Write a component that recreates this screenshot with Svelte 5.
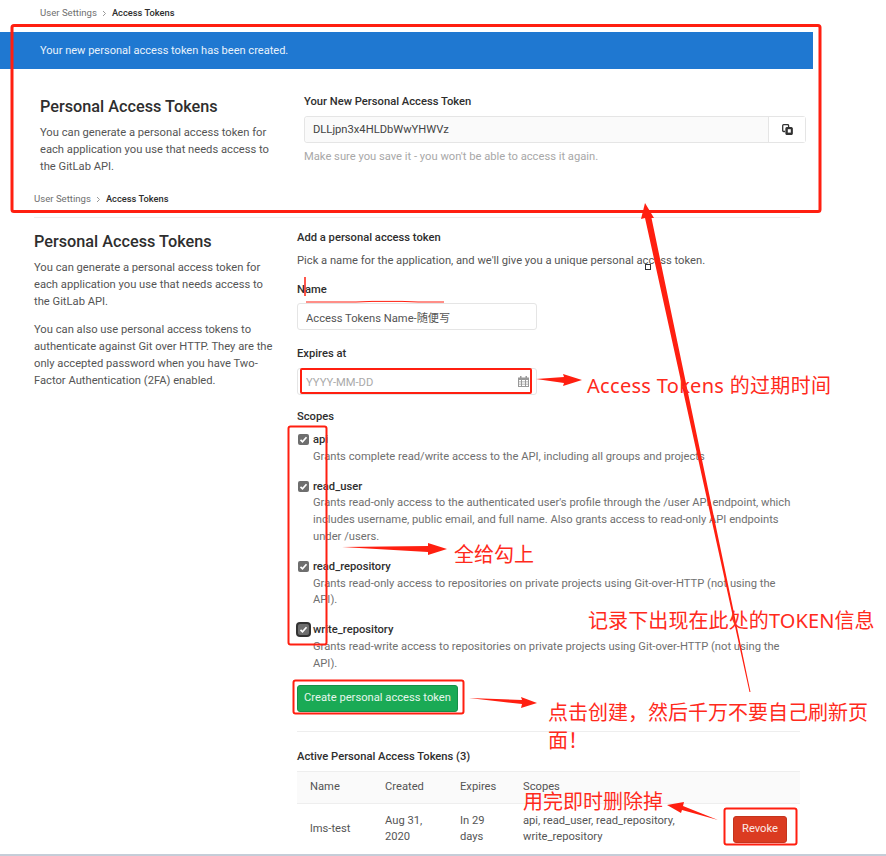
<script>
  const scopes = [
    { name: "api", lines: "Grants complete read/write access to the API, including all groups and projects" },
    { name: "read_user", lines: "Grants read-only access to the authenticated user's profile through the /user API endpoint, which includes username, public email, and full name. Also grants access to read-only API endpoints under /users." },
    { name: "read_repository", lines: "Grants read-only access to repositories on private projects using Git-over-HTTP (not using the API)." },
    { name: "write_repository", lines: "Grants read-write access to repositories on private projects using Git-over-HTTP (not using the API).", focus: true }
  ];
</script>

<style>
  :global(body) {
    font-family: Roboto, "Noto Sans CJK SC", sans-serif;
    background: #fff;
    color: #2e2e2e;
  }

  .page {
    position: relative;
    width: 886px;
    height: 856px;
    overflow: hidden;
    font-size: 11.2px;
    line-height: 16.8px;
  }

  .crumbs {
    display: flex;
    align-items: center;
    gap: 5px;
    height: 26px;
    padding-left: 40px;
    font-size: 9.6px;
    color: #707070;
  }

  .crumbs b {
    font-size: 9.3px;
    font-weight: 500;
    color: #2e2e2e;
  }

  .crumbs svg {
    width: 5px;
    height: 7px;
  }

  .crumbs.second {
    margin: 19px 0 0 34px;
    padding-left: 0;
    height: 24px;
    width: 766px;
    padding-bottom: 6px;
    border-bottom: 1px solid #eee;
  }

  .banner {
    margin-top: 6px;
    width: 773px;
    height: 35px;
    padding: 2px 0 0 40px;
    display: flex;
    align-items: center;
    background: #1f78d1;
    color: #e8f2fb;
    font-size: 11.05px;
  }

  .created {
    display: flex;
    padding: 25px 80px 0 40px;
    height: 74px;
  }

  .created .intro {
    width: 264px;
    flex: none;
  }

  .created .intro p {
    width: 236px;
  }

  .created .result {
    flex: 1;
  }

  h2 {
    margin: 0 0 5px;
    font-size: 16.25px;
    line-height: 26px;
    font-weight: 500;
  }

  p {
    margin: 0;
    color: #555;
  }

  label,
  h3,
  h4 {
    display: block;
    margin: 0;
    font-size: 11.2px;
    font-weight: 500;
    color: #2e2e2e;
  }

  .tokenrow {
    display: flex;
    margin-top: 5px;
    height: 27px;
    border: 1px solid #e5e5e5;
    border-radius: 3px;
    box-sizing: border-box;
  }

  .tokenrow input {
    flex: 1;
    min-width: 0;
    border: 0;
    border-right: 1px solid #e5e5e5;
    background: #fafafa;
    padding: 2px 8px 0;
    font: inherit;
    color: #444;
    border-radius: 3px 0 0 3px;
  }

  .tokenrow button {
    width: 36px;
    border: 0;
    background: #fff;
    padding: 0;
    display: flex;
    align-items: center;
    justify-content: center;
  }

  .hint {
    margin-top: 6px;
    color: #a8a8a8;
  }

  .main {
    display: flex;
    padding: 12px 86px 0 34px;
  }

  .main .intro {
    width: 263px;
    flex: none;
    margin-top: -1px;
  }

  .main .intro p {
    width: 240px;
    margin-bottom: 12px;
  }

  .form {
    flex: 1;
    min-width: 0;
  }

  .form > p {
    margin-top: 6px;
  }

  .field {
    margin-top: 12px;
  }

  .field.expires {
    margin-top: 16px;
  }

  .field.scopes {
    margin-top: 14px;
  }

  .field input {
    display: block;
    width: 240px;
    height: 27px;
    margin-top: 5px;
    box-sizing: border-box;
    border: 1px solid #e5e5e5;
    border-radius: 3px;
    padding: 1px 8px 0;
    font: inherit;
    color: #555;
    background: #fff;
  }

  .field input::placeholder {
    color: #aaa;
  }

  .dateinput {
    position: relative;
    width: 240px;
  }

  .dateinput svg {
    position: absolute;
    right: 8px;
    top: 8px;
    width: 11px;
    height: 11px;
  }

  .scope {
    display: flex;
    gap: 4px;
    margin-top: 6px;
    margin-bottom: 13px;
  }

  .scope + .scope {
    margin-top: 0;
  }

  .check {
    flex: none;
    width: 11px;
    height: 11px;
    margin-top: 2px;
    margin-left: 1px;
    border-radius: 2px;
    background: #6e6e6e;
    display: flex;
    align-items: center;
    justify-content: center;
  }

  .check.focus {
    box-shadow: 0 0 0 2px #333;
  }

  .check svg {
    width: 9px;
    height: 9px;
  }

  .scope strong {
    display: block;
    font-weight: 500;
    color: #2e2e2e;
  }

  .scope span.text {
    display: block;
    color: #707070;
  }

  .create {
    display: block;
    margin-top: -1px;
    width: 161px;
    height: 27px;
    padding: 0;
    border: 1px solid #168f48;
    border-radius: 3px;
    background: #1aaa55;
    color: #e6f6ec;
    font: inherit;
  }

  .divider {
    height: 1px;
    background: #eee;
    margin-top: 19px;
  }

  h4 {
    margin-top: 17px;
  }

  table {
    width: 100%;
    margin-top: 6px;
    border-collapse: collapse;
    table-layout: fixed;
    color: #555;
  }

  th {
    height: 31px;
    background: #fafafa;
    border-top: 1px solid #eee;
    border-bottom: 1px solid #eee;
    text-align: left;
    font-weight: 400;
    padding: 0 0 0 13px;
  }

  td {
    height: 50px;
    padding: 0 0 0 13px;
  }

  .col1 {
    width: 62px;
  }

  .col2 {
    width: 50px;
  }

  .col4 {
    width: 165px;
  }

  .revoke {
    width: 54px;
    height: 27px;
    padding: 0;
    border: 1px solid #c4341d;
    border-radius: 3px;
    background: #db3b21;
    color: #fbe9e5;
    font: inherit;
    margin-left: 32px;
  }

  .statusbar {
    position: absolute;
    left: 0;
    right: 0;
    bottom: 0;
    height: 2px;
    background: #c5cdd8;
  }

  .marks {
    position: absolute;
    inset: 0;
    width: 886px;
    height: 856px;
  }

  .note {
    position: absolute;
    font-family: "Noto Sans", "Noto Sans CJK SC", sans-serif;
    font-size: 20px;
    line-height: 28px;
    color: #ff2a1c;
    white-space: nowrap;
  }

  .n1 { left: 587px; top: 372px; letter-spacing: 0.3px; }
  .n2 { left: 454px; top: 541px; }
  .n3 { left: 588px; top: 607px; letter-spacing: 0.1px; }
  .n4 { left: 548px; top: 699px; width: 322px; white-space: normal; }
  .n5 { left: 523px; top: 788px; }
</style>

<div class="page">
  <div class="crumbs">
    <span>User Settings</span>
    <svg viewBox="0 0 5 7"><path d="M1 1l2.5 2.5L1 6" fill="none" stroke="#999" /></svg>
    <b>Access Tokens</b>
  </div>

  <div class="banner">Your new personal access token has been created.</div>

  <section class="created">
    <div class="intro">
      <h2>Personal Access Tokens</h2>
      <p>You can generate a personal access token for each application you use that needs access to the GitLab API.</p>
    </div>
    <div class="result">
      <label for="newtoken">Your New Personal Access Token</label>
      <div class="tokenrow">
        <input id="newtoken" readonly value="DLLjpn3x4HLDbWwYHWVz" />
        <button aria-label="Copy">
          <svg width="11" height="11" viewBox="0 0 11 11" fill="none" stroke="#333" stroke-width="1.3">
            <path d="M3 7.5H1.6a1 1 0 0 1-.9-.9V1.6a1 1 0 0 1 .9-.9h4a1 1 0 0 1 1 .9V3" />
            <rect x="4" y="3.6" width="6.2" height="6.8" rx="1" fill="#333" />
            <rect x="5.8" y="5.2" width="3" height="3.4" fill="#fff" stroke="none" />
          </svg>
        </button>
      </div>
      <p class="hint">Make sure you save it - you won't be able to access it again.</p>
    </div>
  </section>

  <div class="crumbs second">
    <span>User Settings</span>
    <svg viewBox="0 0 5 7"><path d="M1 1l2.5 2.5L1 6" fill="none" stroke="#999" /></svg>
    <b>Access Tokens</b>
  </div>

  <section class="main">
    <div class="intro">
      <h2>Personal Access Tokens</h2>
      <p>You can generate a personal access token for each application you use that needs access to the GitLab API.</p>
      <p>You can also use personal access tokens to authenticate against Git over HTTP. They are the only accepted password when you have Two-Factor Authentication (2FA) enabled.</p>
    </div>

    <div class="form">
      <h3>Add a personal access token</h3>
      <p>Pick a name for the application, and we'll give you a unique personal access token.</p>

      <div class="field">
        <label for="name">Name</label>
        <input id="name" value="Access Tokens Name-随便写" />
      </div>

      <div class="field expires">
        <label for="expires">Expires at</label>
        <div class="dateinput">
          <input id="expires" placeholder="YYYY-MM-DD" />
          <svg viewBox="0 0 11 11" fill="#999">
            <path d="M2 0h1.5v1.5h4V0H9v1.5h2V11H0V1.5h2zM1 4v1.5h2V4zm3 0v1.5h3V4zm4 0v1.5h2V4zM1 6.2v1.5h2V6.2zm3 0v1.5h3V6.2zm4 0v1.5h2V6.2zM1 8.4V10h2V8.4zm3 0V10h3V8.4zm4 0V10h2V8.4z" fill-rule="evenodd" />
          </svg>
        </div>
      </div>

      <div class="field scopes">
        <h3>Scopes</h3>
        {#each scopes as s}
          <div class="scope">
            <span class="check" class:focus={s.focus}>
              <svg viewBox="0 0 9 9"><path d="M1.5 4.8l2 2 4-4.6" fill="none" stroke="#fff" stroke-width="1.7" /></svg>
            </span>
            <div>
              <strong>{s.name}</strong>
              <span class="text">{s.lines}</span>
            </div>
          </div>
        {/each}
      </div>

      <button class="create">Create personal access token</button>
      <div class="divider"></div>

      <h4>Active Personal Access Tokens (3)</h4>
      <table>
        <thead>
          <tr>
            <th class="col1">Name</th>
            <th class="col1">Created</th>
            <th class="col2">Expires</th>
            <th class="col4">Scopes</th>
            <th></th>
          </tr>
        </thead>
        <tbody>
          <tr>
            <td>lms-test</td>
            <td>Aug 31, 2020</td>
            <td>In 29 days</td>
            <td>api, read_user, read_repository, write_repository</td>
            <td><button class="revoke">Revoke</button></td>
          </tr>
        </tbody>
      </table>
    </div>
  </section>

  <div class="statusbar"></div>

  <svg class="marks" viewBox="0 0 886 856" fill="#ff1f10" stroke="none">
    <g fill="none" stroke="#ff1f10" stroke-linejoin="round">
      <rect x="12" y="25.5" width="808" height="186" rx="2" stroke-width="3" />
      <rect x="301" y="369" width="230" height="24" rx="1" stroke-width="2" />
      <rect x="288.5" y="426.5" width="38" height="218" rx="2" stroke-width="2" />
      <rect x="293.5" y="680.5" width="170" height="33" rx="2" stroke-width="2" />
      <rect x="724.5" y="808.5" width="72" height="36" rx="2" stroke-width="2" />
      <path d="M305 277v19" stroke-width="1.5" />
      <path d="M306 302h50l16-.6h30l16 .6h26" stroke-width="1" />
    </g>
    <polygon points="536,379 564,377 563,374 582,380 563,386 564,383" />
    <polygon points="342,547 428,546 428,543 447,549 428,555 428,552" />
    <polygon points="469,698 522,700 521,697 537,703 521,708 522,704" />
    <polygon points="718,820 682,810 681,813 667,805 684,802 683,806" />
    <polygon points="645,203 654,218 651.5,218 750.5,692 749.5,692 645,218 641,219" />
    <rect x="645.5" y="264.5" width="5" height="5" fill="#fff" stroke="#333" />
  </svg>

  <div class="note n1">Access Tokens 的过期时间</div>
  <div class="note n2">全给勾上</div>
  <div class="note n3">记录下出现在此处的TOKEN信息</div>
  <div class="note n4">点击创建，然后千万不要自己刷新页面！</div>
  <div class="note n5">用完即时删除掉</div>
</div>
